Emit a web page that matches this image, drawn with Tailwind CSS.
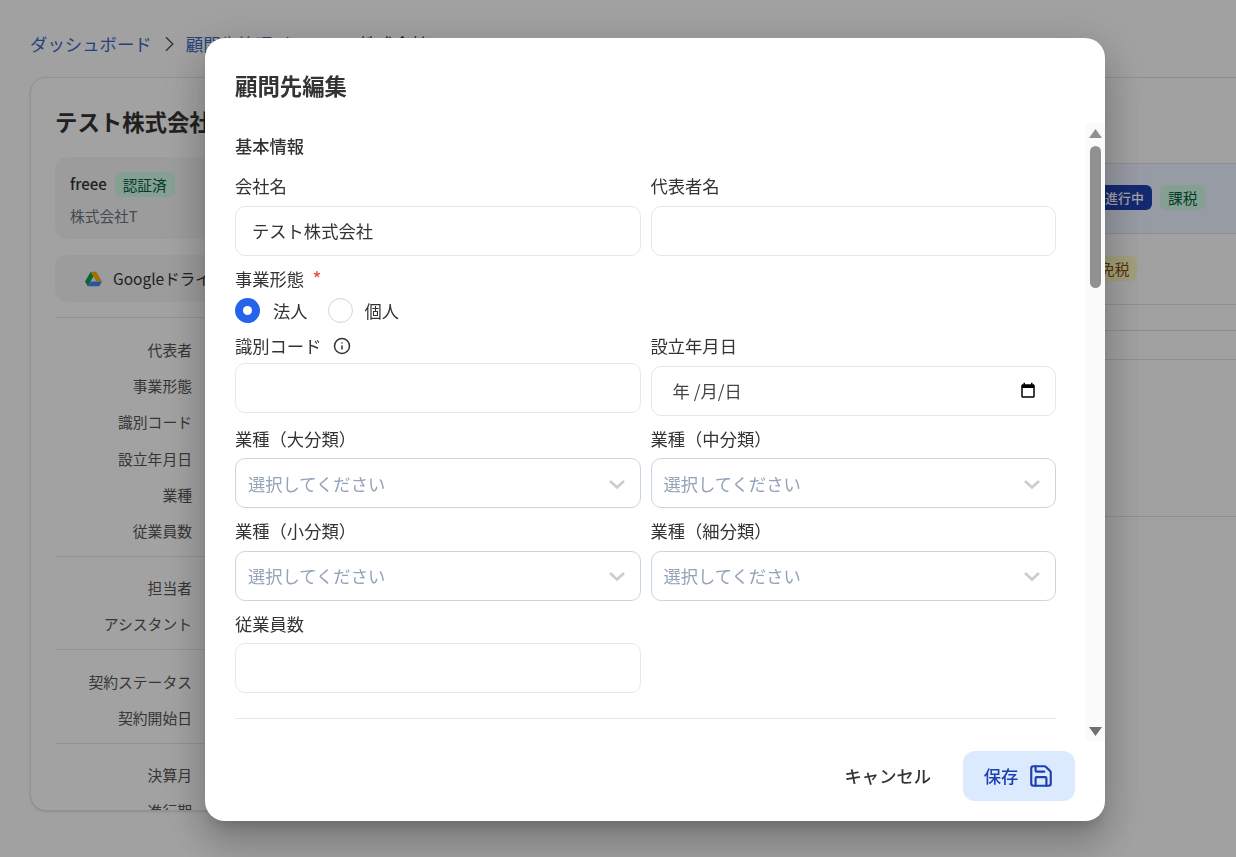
<!DOCTYPE html>
<html lang="ja">
<head>
    <meta charset="UTF-8">
    <title>顧問先編集</title>
    <script src="https://cdn.jsdelivr.net/npm/@tailwindcss/browser@4"></script>
</head>
<body class="bg-[#fcfcfc] h-[857px] overflow-hidden font-['Noto_Sans_CJK_JP','Noto_Sans',sans-serif] text-[#333]">

    <!-- Page behind the dialog -->
    <div class="pl-[30px] h-[857px] overflow-hidden">
        <nav class="flex items-center w-[1400px] h-[34px] mt-[27px] mb-[16px] text-[17.4px] leading-[34px] text-[#3b66c4] whitespace-nowrap">
            <span>ダッシュボード</span>
            <svg class="w-[18px] h-[18px] mx-[8px] shrink-0 text-[#555]" viewBox="0 0 24 24" fill="none" stroke="currentColor" stroke-width="2"><path d="m8 3 9 9-9 9"/></svg>
            <span>顧問先管理</span>
            <svg class="w-[18px] h-[18px] mx-[8px] shrink-0 text-[#555]" viewBox="0 0 24 24" fill="none" stroke="currentColor" stroke-width="2"><path d="m8 3 9 9-9 9"/></svg>
            <span class="text-[#333]">テスト株式会社</span>
            <span class="ml-[824px] w-[30px] h-[26px] border border-[#ccc] rounded-md"></span>
        </nav>

        <div class="flex w-[1400px]">
            <!-- Left card -->
            <aside class="w-[420px] h-[734px] shrink-0 overflow-hidden bg-[#fdfdfd] border border-[#e5e5e5] rounded-2xl px-[24px] shadow-sm">
                <h2 class="mt-[27px] h-[32px] text-[22.4px] leading-[32px] font-bold">テスト株式会社</h2>
                <div class="mt-[20px] h-[82px] rounded-xl bg-[#f5f5f5] px-[15px] pt-[15px]">
                    <div class="flex items-center gap-[8px]">
                        <span class="text-[15px] font-medium">freee</span>
                        <span class="h-[25px] px-[8px] rounded-md bg-[#d1fae5] text-[#065f46] text-[14.7px] leading-[25px]">認証済</span>
                    </div>
                    <p class="mt-[8px] text-[14.7px] leading-[22px] text-[#6b7280]">株式会社T</p>
                </div>
                <div class="mt-[16px] h-[47px] rounded-xl bg-[#f5f5f5] flex items-center pl-[30px] gap-[11px]">
                    <svg class="w-[17px] h-[16px]" viewBox="0 0 17 15.5">
                        <path d="M5.7.5 8.500 5 2.800 15 0 10.300z" fill="#0f9d58"/>
                        <path d="M5.7.5h5.600l5.700 9.800h-5.600z" fill="#f4b400"/>
                        <path d="M5.600 10.300H17L14.200 15H2.800z" fill="#4285f4"/>
                    </svg>
                    <span class="text-[15.5px]">Googleドライブ</span>
                </div>
                <div class="mt-[15px] border-t border-[#e5e5e5] pt-[14px]">
                    <dl class="w-[137px] text-right text-[14.8px] leading-[36.2px] text-[#555]">
                        <div>代表者</div><div>事業形態</div><div>識別コード</div><div>設立年月日</div><div>業種</div><div>従業員数</div>
                    </dl>
                </div>
                <div class="mt-[7px] border-t border-[#e5e5e5] pt-[13px]">
                    <dl class="w-[137px] text-right text-[14.8px] leading-[36px] text-[#555]">
                        <div>担当者</div><div>アシスタント</div>
                    </dl>
                </div>
                <div class="mt-[7px] border-t border-[#e5e5e5] pt-[14px]">
                    <dl class="w-[137px] text-right text-[14.8px] leading-[36px] text-[#555]">
                        <div>契約ステータス</div><div>契約開始日</div>
                    </dl>
                </div>
                <div class="mt-[7px] border-t border-[#e5e5e5] pt-[13px]">
                    <dl class="w-[137px] text-right text-[14.8px] leading-[36px] text-[#555]">
                        <div>決算月</div><div>進行期</div>
                    </dl>
                </div>
            </aside>

            <!-- Right list -->
            <section class="flex-1 border-t border-[#e0e0e0] text-[14.7px]">
                <div class="h-[85px]"></div>
                <div class="h-[71px] bg-[#edf2ff] border-y border-[#dedede] flex items-center pl-[647px] gap-[8px] pb-[2px]">
                    <span class="h-[25px] w-[55px] text-center rounded-md bg-[#1e40af] text-white text-[12.8px] leading-[25px] font-medium">進行中</span>
                    <span class="h-[25px] px-[8px] rounded-md bg-[#d1fae5] text-[#065f46] leading-[25px]">課税</span>
                </div>
                <div class="h-[71px] border-b border-[#dedede] flex items-center pl-[642px] pb-[2px]">
                    <span class="h-[25px] px-[8px] rounded-md bg-[#fef9c3] text-[#854d0e] leading-[25px]">免税</span>
                </div>
                <div class="h-[26px] border-b border-[#dedede]"></div>
                <div class="h-[29px] border-b border-[#dedede]"></div>
                <div class="h-[157px] border-b border-[#dedede]"></div>
            </section>
        </div>
    </div>

    <!-- Dialog overlay -->
    <div class="fixed inset-0 bg-black/36 pl-[205px] pt-[38px]">
        <div class="w-[900px] h-[783px] bg-white rounded-[20px] flex flex-col overflow-hidden shadow-[0_11px_15px_-7px_rgba(0,0,0,0.2),0_24px_38px_3px_rgba(0,0,0,0.14),0_9px_46px_8px_rgba(0,0,0,0.12)]">
            <h2 class="h-[85px] shrink-0 pl-[30px] pt-[31px] text-[22.4px] leading-[32px] font-semibold">顧問先編集</h2>

            <div class="flex h-[618px] shrink-0">
                <div class="flex-1 overflow-hidden pl-[30px] pr-[30px] pt-[11px] text-[17.3px] leading-[24px]">
                    <h3 class="font-medium mb-[16px]">基本情報</h3>

                    <div class="grid grid-cols-2 gap-x-[10px]">
                        <div>
                            <label class="block">会社名</label>
                            <div class="mt-[8px] h-[50px] rounded-[10px] border border-[#e5e7eb] flex items-center px-[16px]">テスト株式会社</div>
                        </div>
                        <div>
                            <label class="block">代表者名</label>
                            <div class="mt-[8px] h-[50px] rounded-[10px] border border-[#e5e7eb]"></div>
                        </div>
                    </div>

                    <div class="mt-[11px] flex items-start">
                        <label>事業形態</label>
                        <span class="ml-[8px] text-[#ef4444] text-[20px] leading-[24px]">*</span>
                    </div>
                    <div class="mt-[7px] h-[25px] flex items-center">
                        <span class="w-[25px] h-[25px] rounded-full bg-[#2563eb] flex items-center justify-center"><span class="w-[9px] h-[9px] rounded-full bg-white"></span></span>
                        <span class="ml-[13px]">法人</span>
                        <span class="ml-[20px] w-[25px] h-[25px] rounded-full border border-[#d1d5db]"></span>
                        <span class="ml-[12px]">個人</span>
                    </div>

                    <div class="mt-[11px] grid grid-cols-2 gap-x-[10px]">
                        <div>
                            <label class="flex items-center gap-[12px]">識別コード
                                <svg class="w-[18px] h-[18px]" viewBox="0 0 24 24" fill="none" stroke="#333" stroke-width="2" stroke-linecap="round"><circle cx="12" cy="12" r="10"/><path d="M12 16v-4"/><path d="M12 8h.01"/></svg>
                            </label>
                            <div class="mt-[5px] h-[50px] rounded-[10px] border border-[#e5e7eb]"></div>
                        </div>
                        <div>
                            <label class="block">設立年月日</label>
                            <div class="mt-[8px] h-[50px] rounded-[10px] border border-[#e5e7eb] flex items-center justify-between pl-[21px] pr-[18px] text-[#444]">
                                <span>年 /月/日</span>
                                <svg class="w-[18px] h-[18px]" viewBox="0 0 24 24" fill="#000"><path d="M19 3h-1V1h-2v2H8V1H6v2H5c-1.100 0-2 .9-2 2v14c0 1.100.9 2 2 2h14c1.100 0 2-.9 2-2V5c0-1.100-.9-2-2-2zm0 16H5V8h14v11z"/></svg>
                            </div>
                        </div>
                    </div>

                    <div class="mt-[11px] grid grid-cols-2 gap-x-[10px]">
                        <div>
                            <label class="block">業種（大分類）</label>
                            <div class="mt-[7px] h-[50px] rounded-[10px] border border-[#cbd5e1] flex items-center justify-between pl-[12px] pr-[13px] pt-[2px] text-[#94a3b8]">
                                <span>選択してください</span>
                                <svg class="w-[20px] h-[20px]" viewBox="0 0 20 20" fill="none" stroke="#cccccc" stroke-width="2.6"><path d="m3 7 7 6.500L17 7"/></svg>
                            </div>
                        </div>
                        <div>
                            <label class="block">業種（中分類）</label>
                            <div class="mt-[7px] h-[50px] rounded-[10px] border border-[#cbd5e1] flex items-center justify-between pl-[12px] pr-[13px] pt-[2px] text-[#94a3b8]">
                                <span>選択してください</span>
                                <svg class="w-[20px] h-[20px]" viewBox="0 0 20 20" fill="none" stroke="#cccccc" stroke-width="2.6"><path d="m3 7 7 6.500L17 7"/></svg>
                            </div>
                        </div>
                    </div>

                    <div class="mt-[11px] grid grid-cols-2 gap-x-[10px]">
                        <div>
                            <label class="block">業種（小分類）</label>
                            <div class="mt-[8px] h-[50px] rounded-[10px] border border-[#cbd5e1] flex items-center justify-between pl-[12px] pr-[13px] text-[#94a3b8]">
                                <span>選択してください</span>
                                <svg class="w-[20px] h-[20px]" viewBox="0 0 20 20" fill="none" stroke="#cccccc" stroke-width="2.6"><path d="m3 7 7 6.500L17 7"/></svg>
                            </div>
                        </div>
                        <div>
                            <label class="block">業種（細分類）</label>
                            <div class="mt-[8px] h-[50px] rounded-[10px] border border-[#cbd5e1] flex items-center justify-between pl-[12px] pr-[13px] text-[#94a3b8]">
                                <span>選択してください</span>
                                <svg class="w-[20px] h-[20px]" viewBox="0 0 20 20" fill="none" stroke="#cccccc" stroke-width="2.6"><path d="m3 7 7 6.500L17 7"/></svg>
                            </div>
                        </div>
                    </div>

                    <div class="mt-[11px] grid grid-cols-2 gap-x-[10px]">
                        <div>
                            <label class="block">従業員数</label>
                            <div class="mt-[7px] h-[50px] rounded-[10px] border border-[#e5e7eb]"></div>
                        </div>
                    </div>

                    <hr class="mt-[25px] border-[#e5e7eb]">
                </div>

                <!-- Scrollbar -->
                <div class="w-[19px] shrink-0 bg-[#fafafa] flex flex-col items-start pl-[3px] pt-[6px]">
                    <svg class="w-[13px] h-[9px] shrink-0" viewBox="0 0 13 9" fill="#909090"><path d="M6.500 0 13 9H0z"/></svg>
                    <div class="mt-[8px] ml-[1px] w-[11px] h-[142px] rounded-full bg-[#919191]"></div>
                    <svg class="mt-auto mb-[5px] w-[13px] h-[9px] shrink-0" viewBox="0 0 13 9" fill="#707070"><path d="M0 0h13L6.500 9z"/></svg>
                </div>
            </div>

            <div class="flex-1 flex items-start justify-end pt-[10px] pr-[30px] text-[17.3px] font-medium">
                <button class="mr-[32px] h-[50px]">キャンセル</button>
                <button class="w-[112px] h-[50px] rounded-xl bg-[#dbeafe] text-[#1e40af] flex items-center justify-center gap-[10px]">
                    保存
                    <svg class="w-[26px] h-[26px]" viewBox="0 0 24 24" fill="none" stroke="currentColor" stroke-width="2" stroke-linecap="round" stroke-linejoin="round"><path d="M15.200 3a2 2 0 0 1 1.400.6l3.800 3.800a2 2 0 0 1 .6 1.400V19a2 2 0 0 1-2 2H5a2 2 0 0 1-2-2V5a2 2 0 0 1 2-2z"/><path d="M17 21v-7a1 1 0 0 0-1-1H8a1 1 0 0 0-1 1v7"/><path d="M7 3v4a1 1 0 0 0 1 1h7"/></svg>
                </button>
            </div>
        </div>
    </div>

</body>
</html>
